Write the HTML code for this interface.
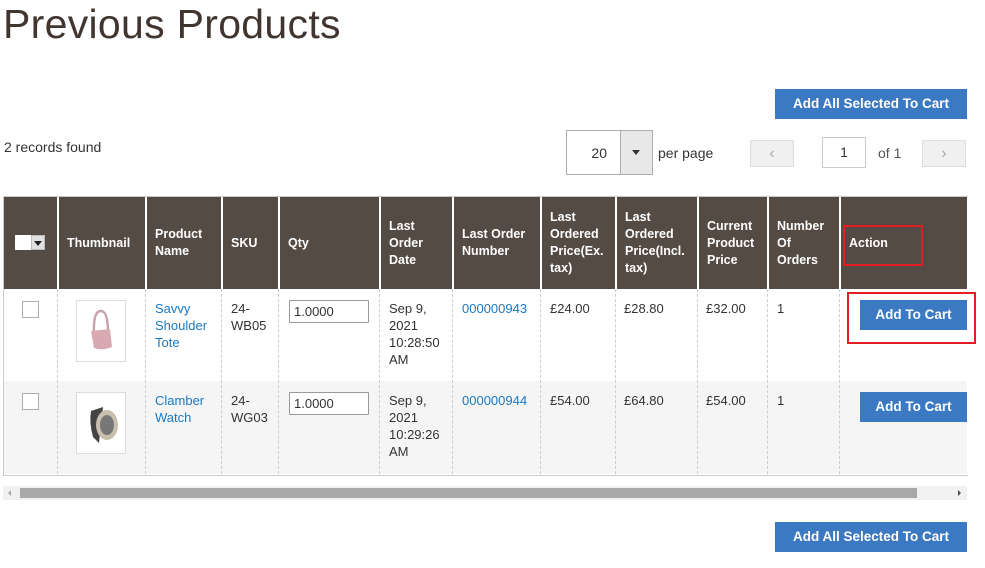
<!DOCTYPE html>
<html><head><meta charset="utf-8"><style>
body{margin:0;width:985px;height:568px;background:#fff;font-family:"Liberation Sans",sans-serif;color:#333;position:relative;overflow:hidden;font-size:13px}
.a{position:absolute}
.btn{position:absolute;background:#3b79c3;color:#fff;font-weight:bold;font-size:13.5px;text-align:center;line-height:30px}
.h{position:absolute;top:197px;height:92px;background:#544b45;color:#fff;font-weight:bold;font-size:12.5px;line-height:17px;display:flex;align-items:center;padding-left:8px;box-sizing:border-box;border-left:2px solid #fff}
.c{position:absolute;line-height:17px;font-size:13px}
.l{color:#1979c3}
.vl{position:absolute;width:0;border-left:1px dashed #ccc}
.inp{position:absolute;border:1px solid #999;border-radius:1px;font-size:13px;line-height:21px;padding-left:4px;box-sizing:border-box;width:80px;height:23px;background:#fff}
.cb{position:absolute;width:15px;height:15px;border:1px solid #adadad;background:#fff}
.thumb{position:absolute;width:48px;height:60px;border:1px solid #ddd;background:#fff}
</style></head><body>
<div class="a" style="left:3px;top:1px;font-size:41px;color:#41362f;letter-spacing:0.3px">Previous Products</div>
<div class="btn" style="left:775px;top:89px;width:192px;height:30px">Add All Selected To Cart</div>
<div class="a" style="left:4px;top:139px;font-size:14px">2 records found</div>
<div class="a" style="left:566px;top:130px;width:86px;height:45px;border:1px solid #adadad;box-sizing:border-box;background:#fff"></div>
<div class="a" style="left:566px;top:145px;width:41px;text-align:right;font-size:14px">20</div>
<div class="a" style="left:620px;top:130px;width:33px;height:45px;background:#e8e8e8;border:1px solid #adadad;box-sizing:border-box"></div>
<div class="a" style="left:632px;top:150px;width:0;height:0;border-left:4px solid transparent;border-right:4px solid transparent;border-top:5px solid #333"></div>
<div class="a" style="left:658px;top:145px;font-size:14px">per page</div>
<div class="a" style="left:750px;top:140px;width:44px;height:27px;background:#f0f0f0;border:1px solid #ddd;box-sizing:border-box;text-align:center;color:#aaa;line-height:25px;font-size:16px">&#8249;</div>
<div class="a" style="left:822px;top:137px;width:44px;height:31px;border:1px solid #ccc;box-sizing:border-box;text-align:center;line-height:29px;font-size:14px">1</div>
<div class="a" style="left:878px;top:145px;font-size:14px;color:#555">of 1</div>
<div class="a" style="left:922px;top:140px;width:44px;height:27px;background:#f0f0f0;border:1px solid #ddd;box-sizing:border-box;text-align:center;color:#aaa;line-height:25px;font-size:16px">&#8250;</div>

<div class="a" style="left:3px;top:196px;width:964px;height:278px;background:#fff;border-top:1px solid #ccc;border-bottom:1px solid #ccc;border-left:1px solid #ccc"></div>
<div class="a" style="left:4px;top:381px;width:963px;height:93px;background:#f5f5f5"></div>
<div class="h" style="left:4px;width:53px;border-left:none"></div>
<div class="a" style="left:15px;top:235px;width:16px;height:15px;background:#fff"></div>
<div class="a" style="left:31px;top:235px;width:14px;height:15px;background:#e0e0e0;border:1px solid #bbb;box-sizing:border-box"></div>
<div class="a" style="left:34px;top:241px;width:0;height:0;border-left:4px solid transparent;border-right:4px solid transparent;border-top:5px solid #222"></div>
<div class="h" style="left:57px;width:88px">Thumbnail</div>
<div class="h" style="left:145px;width:76px">Product<br>Name</div>
<div class="h" style="left:221px;width:57px">SKU</div>
<div class="h" style="left:278px;width:101px">Qty</div>
<div class="h" style="left:379px;width:73px">Last<br>Order<br>Date</div>
<div class="h" style="left:452px;width:88px">Last Order<br>Number</div>
<div class="h" style="left:540px;width:75px">Last<br>Ordered<br>Price(Ex.<br>tax)</div>
<div class="h" style="left:615px;width:82px">Last<br>Ordered<br>Price(Incl.<br>tax)</div>
<div class="h" style="left:697px;width:70px">Current<br>Product<br>Price</div>
<div class="h" style="left:767px;width:72px">Number<br>Of<br>Orders</div>
<div class="h" style="left:839px;width:128px">Action</div>
<div class="a" style="left:843px;top:225px;width:76px;height:37px;border:2px solid #e51c23"></div>

<div class="vl" style="left:57px;top:289px;height:185px"></div>
<div class="vl" style="left:145px;top:289px;height:185px"></div>
<div class="vl" style="left:221px;top:289px;height:185px"></div>
<div class="vl" style="left:278px;top:289px;height:185px"></div>
<div class="vl" style="left:379px;top:289px;height:185px"></div>
<div class="vl" style="left:452px;top:289px;height:185px"></div>
<div class="vl" style="left:540px;top:289px;height:185px"></div>
<div class="vl" style="left:615px;top:289px;height:185px"></div>
<div class="vl" style="left:697px;top:289px;height:185px"></div>
<div class="vl" style="left:767px;top:289px;height:185px"></div>
<div class="vl" style="left:839px;top:289px;height:185px"></div>

<div class="cb" style="left:22px;top:301px"></div>
<div class="thumb" style="left:76px;top:300px"><svg width="48" height="60"><path d="M17 32 Q16 10 24 10 Q31 10 31 32" fill="none" stroke="#c9a3ab" stroke-width="2.5"/><path d="M14 30 L33 28 L35 46 Q25 50 17 47 Z" fill="#d8a9b0"/></svg></div>
<div class="c l" style="left:155px;top:300px">Savvy<br>Shoulder<br>Tote</div>
<div class="c" style="left:231px;top:300px">24-<br>WB05</div>
<div class="inp" style="left:289px;top:300px">1.0000</div>
<div class="c" style="left:389px;top:300px">Sep 9,<br>2021<br>10:28:50<br>AM</div>
<div class="c l" style="left:462px;top:300px">000000943</div>
<div class="c" style="left:550px;top:300px">£24.00</div>
<div class="c" style="left:624px;top:300px">£28.80</div>
<div class="c" style="left:706px;top:300px">£32.00</div>
<div class="c" style="left:777px;top:300px">1</div>
<div class="btn" style="left:860px;top:300px;width:107px;height:30px">Add To Cart</div>
<div class="a" style="left:847px;top:292px;width:125px;height:48px;border:2px solid #e51c23"></div>

<div class="cb" style="left:22px;top:393px"></div>
<div class="thumb" style="left:76px;top:392px"><svg width="48" height="60"><path d="M14 18 Q12 30 16 44 L22 50 L26 14 Z" fill="#444"/><ellipse cx="30" cy="32" rx="11" ry="15" fill="#c8bfae"/><ellipse cx="30" cy="32" rx="7" ry="10" fill="#777"/></svg></div>
<div class="c l" style="left:155px;top:392px">Clamber<br>Watch</div>
<div class="c" style="left:231px;top:392px">24-<br>WG03</div>
<div class="inp" style="left:289px;top:392px">1.0000</div>
<div class="c" style="left:389px;top:392px">Sep 9,<br>2021<br>10:29:26<br>AM</div>
<div class="c l" style="left:462px;top:392px">000000944</div>
<div class="c" style="left:550px;top:392px">£54.00</div>
<div class="c" style="left:624px;top:392px">£64.80</div>
<div class="c" style="left:706px;top:392px">£54.00</div>
<div class="c" style="left:777px;top:392px">1</div>
<div class="btn" style="left:860px;top:392px;width:107px;height:30px">Add To Cart</div>

<div class="a" style="left:3px;top:486px;width:964px;height:14px;background:#f1f1f1"></div>
<div class="a" style="left:20px;top:488px;width:897px;height:10px;background:#a8a8a8"></div>
<div class="a" style="left:8px;top:490px;width:0;height:0;border-top:3px solid transparent;border-bottom:3px solid transparent;border-right:3px solid #aaa"></div>
<div class="a" style="left:958px;top:490px;width:0;height:0;border-top:3px solid transparent;border-bottom:3px solid transparent;border-left:3px solid #505050"></div>
<div class="btn" style="left:775px;top:522px;width:192px;height:30px">Add All Selected To Cart</div>
</body></html>
